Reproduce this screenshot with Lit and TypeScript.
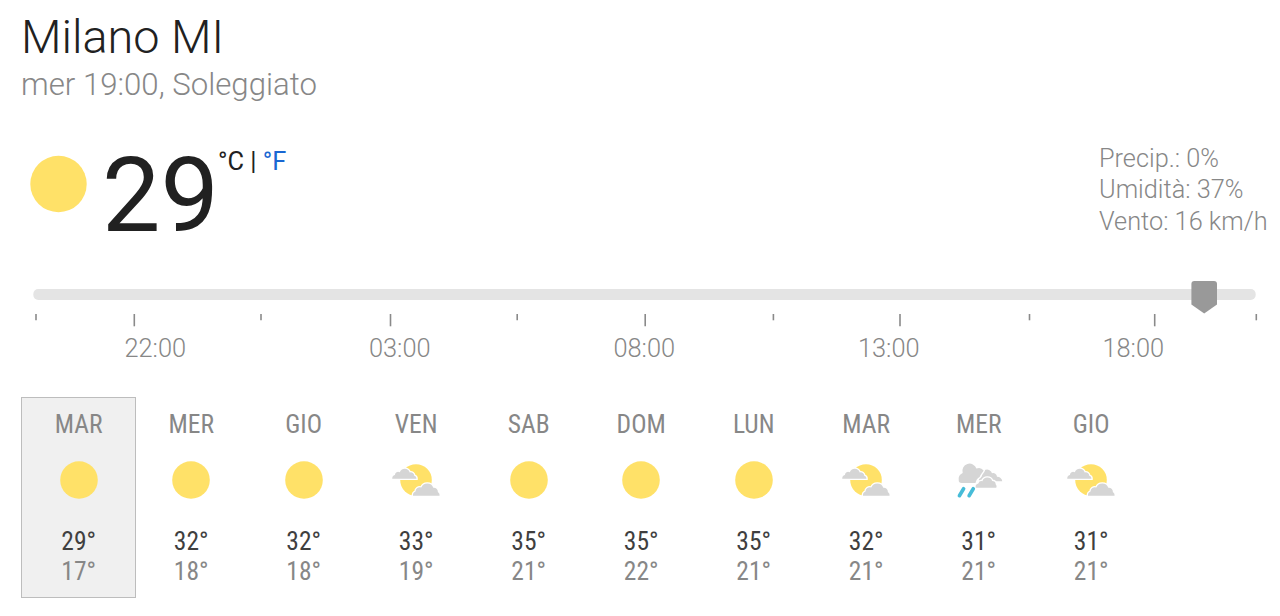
import { LitElement, html, css, svg } from "lit";
import { customElement, property } from "lit/decorators.js";
import { classMap } from "lit/directives/class-map.js";

type Condition = "sunny" | "partly" | "rain";

interface Day {
  name: string;
  condition: Condition;
  high: number;
  low: number;
}

const DAYS: Day[] = [
  { name: "MAR", condition: "sunny", high: 29, low: 17 },
  { name: "MER", condition: "sunny", high: 32, low: 18 },
  { name: "GIO", condition: "sunny", high: 32, low: 18 },
  { name: "VEN", condition: "partly", high: 33, low: 19 },
  { name: "SAB", condition: "sunny", high: 35, low: 21 },
  { name: "DOM", condition: "sunny", high: 35, low: 22 },
  { name: "LUN", condition: "sunny", high: 35, low: 21 },
  { name: "MAR", condition: "partly", high: 32, low: 21 },
  { name: "MER", condition: "rain", high: 31, low: 21 },
  { name: "GIO", condition: "partly", high: 31, low: 21 },
];

const HOURS = ["22:00", "03:00", "08:00", "13:00", "18:00"];
const MAJOR_TICKS = [101.3, 357.5, 612.2, 867, 1121.7];
const MINOR_TICKS = [3, 228, 484.2, 740.4, 996.5, 1223.3];

@customElement("weather-icon")
export class WeatherIcon extends LitElement {
  @property() condition: Condition = "sunny";

  static styles = css`
    :host { display: block; }
    svg { display: block; width: 100%; height: 100%; }
    .sun { fill: #ffe168; }
    .cloud { fill: #d5d5d5; }
    .edged { stroke: #fff; stroke-width: 2.6; paint-order: stroke; }
    .drop { stroke: #46bcd8; stroke-width: 3.6; stroke-linecap: round; }
  `;

  private renderShape() {
    switch (this.condition) {
      case "partly":
        return svg`
          <circle class="sun" cx="25" cy="20" r="15.8" />
          <path class="cloud edged" d="M1.2 18.8A3.7 3.7 0 0 1 3.9 15.1A3.2 3.2 0 0 1 8.8 12.3A5.2 5.2 0 0 1 18.7 12.4A3.6 3.6 0 0 1 23.3 15.8A3 3 0 0 1 25.5 18.8Z" />
          <path class="cloud edged" d="M22 35.8A4 4 0 0 1 24.5 31.6A4.3 4.3 0 0 1 30.3 27.6A6.4 6.4 0 0 1 42.3 27.8A4 4 0 0 1 46.9 31.9A3.8 3.8 0 0 1 48.6 35.8Z" />
        `;
      case "rain":
        return svg`
          <path class="cloud" d="M25 21.2A4 4 0 0 1 28 16.3A5.2 5.2 0 0 1 38 13.3A3.9 3.9 0 0 1 43 16.7A5 5 0 0 1 48.3 21.2Z" />
          <path class="cloud edged" d="M7.6 23.1A3 3 0 0 1 4.7 20A6.8 6.8 0 0 1 8.7 12.9A7 7 0 0 1 22.4 8.6A6 6 0 0 1 29.6 10.5C28.8 12.5 26.4 14.4 25.6 17C23.4 18 22.2 20.2 21.5 23.1Z" />
          <path class="cloud edged" d="M21.8 27.8A3.6 3.6 0 0 1 24.3 23.4A3.6 3.6 0 0 1 28.4 21.2A5.2 5.2 0 0 1 38.2 20.9A3.5 3.5 0 0 1 41.7 24.2A3.2 3.2 0 0 1 42.3 27.8Z" />
          <path class="drop" d="M9.6 28.7L5.4 35.7M19.3 28.7L15.1 35.7" />
        `;
      default:
        return svg`<circle class="sun" cx="25" cy="20" r="18.8" />`;
    }
  }

  render() {
    return html`<svg viewBox="0 0 50 40">${this.renderShape()}</svg>`;
  }
}

@customElement("app-root")
export class AppRoot extends LitElement {
  static styles = css`
    :host {
      display: block;
      box-sizing: border-box;
      height: 616px;
      padding: 9px 12px 0 21px;
      overflow: hidden;
      background: #fff;
      color: #212121;
      font-family: Roboto, "Liberation Sans", sans-serif;
      font-weight: 300;
    }

    .place {
      font-size: 46.8px;
      line-height: 56px;
    }

    .summary {
      padding-top: 1px;
      font-size: 31.2px;
      line-height: 38px;
      color: #878787;
    }

    .current {
      display: flex;
      align-items: flex-start;
      height: 140px;
      margin-top: 36px;
    }

    .now-icon {
      width: 75px;
      height: 60px;
      margin-top: 14px;
    }

    .temp {
      margin-left: 6px;
      padding-top: 4px;
      font-size: 104px;
      font-weight: 400;
      line-height: 104px;
    }

    .units {
      margin-left: -1px;
      padding-top: 6px;
      font-size: 25.4px;
      line-height: 30px;
      font-weight: 370;
      white-space: pre;
    }

    .fahrenheit { color: #1967d2; }

    .details {
      width: 169px;
      margin-left: auto;
      padding-top: 3px;
      font-size: 25.3px;
      line-height: 31.4px;
      color: #878787;
      white-space: nowrap;
    }

    .slider {
      display: block;
      width: 1226px;
      height: 50px;
      margin-left: 12px;
    }

    .track { fill: #e4e4e4; }
    .thumb { fill: #999; }
    .tick { stroke: #8a8a8a; stroke-width: 1.6; }

    .hours {
      display: grid;
      grid-template-columns: repeat(5, 244.5px);
      margin: 2px 0 0 12px;
      font-size: 25.4px;
      line-height: 32px;
      text-align: center;
      color: #878787;
    }

    .days {
      display: flex;
      margin-top: 33px;
    }

    .day {
      display: flex;
      flex-direction: column;
      align-items: center;
      box-sizing: border-box;
      flex: none;
      width: 115.4px;
      height: 201px;
      margin-right: -2.9px;
      padding-top: 11px;
      border: 1.5px solid transparent;
      font-family: "Roboto Condensed", Roboto, sans-serif;
      font-stretch: 75%;
      font-size: 25.5px;
      font-weight: 400;
      line-height: 30px;
      color: #878787;
    }

    .day.selected {
      background: #f0f0f0;
      border-color: #bdbdbd;
    }

    .day weather-icon {
      width: 50px;
      height: 40px;
      margin: 21px 0 26px;
    }

    .high { color: #3f3f3f; }
  `;

  private renderSlider() {
    return html`
      <svg class="slider" viewBox="0 0 1226 50">
        <rect class="track" x="0.3" y="9" width="1222.4" height="11" rx="5" />
        <path class="thumb" d="M1158.4 4Q1158.4 1 1161.4 1H1181Q1184 1 1184 4V24.5L1171.2 33.5L1158.4 24.5Z" />
        ${MINOR_TICKS.map((x) => svg`<path class="tick" d="M${x} 34V40.3" />`)}
        ${MAJOR_TICKS.map((x) => svg`<path class="tick" d="M${x} 34V46.3" />`)}
      </svg>
    `;
  }

  private renderDay(day: Day, index: number) {
    return html`
      <div class=${classMap({ day: true, selected: index === 0 })}>
        <span>${day.name}</span>
        <weather-icon .condition=${day.condition}></weather-icon>
        <span class="high">${day.high}°</span>
        <span class="low">${day.low}°</span>
      </div>
    `;
  }

  render() {
    return html`
      <div class="place">Milano MI</div>
      <div class="summary">mer 19:00, Soleggiato</div>

      <div class="current">
        <weather-icon class="now-icon" condition="sunny"></weather-icon>
        <div class="temp">29</div>
        <div class="units">°C | <span class="fahrenheit">°F</span></div>
        <div class="details">
          <div>Precip.: 0%</div>
          <div>Umidità: 37%</div>
          <div>Vento: 16 km/h</div>
        </div>
      </div>

      ${this.renderSlider()}
      <div class="hours">${HOURS.map((hour) => html`<span>${hour}</span>`)}</div>

      <div class="days">${DAYS.map((day, i) => this.renderDay(day, i))}</div>
    `;
  }
}

declare global {
  interface HTMLElementTagNameMap {
    "app-root": AppRoot;
    "weather-icon": WeatherIcon;
  }
}
